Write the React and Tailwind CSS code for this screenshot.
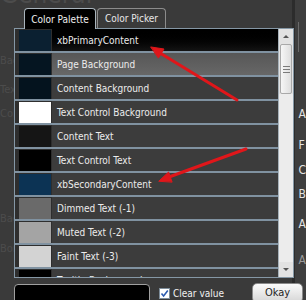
import React from "react";

const rows = [
  { name: "xbPrimaryContent", swatch: "bg-[#0b2031]", row: "bg-gradient-to-b from-[#000000] to-[#141414]" },
  { name: "Page Background", swatch: "bg-[#051521]", row: "bg-gradient-to-b from-[#575757] to-[#676767]" },
  { name: "Content Background", swatch: "bg-[#04131e]", row: "bg-[#3c3c3c]" },
  { name: "Text Control Background", swatch: "bg-[#ffffff]", row: "bg-[#3c3c3c]" },
  { name: "Content Text", swatch: "bg-[#151515]", row: "bg-[#3c3c3c]" },
  { name: "Text Control Text", swatch: "bg-[#000000]", row: "bg-[#3c3c3c]" },
  { name: "xbSecondaryContent", swatch: "bg-[#0c3354]", row: "bg-[#3c3c3c]" },
  { name: "Dimmed Text (-1)", swatch: "bg-[#6a6a6a]", row: "bg-[#3c3c3c]" },
  { name: "Muted Text (-2)", swatch: "bg-[#a4a4a4]", row: "bg-[#3c3c3c]" },
  { name: "Faint Text (-3)", swatch: "bg-[#d3d3d3]", row: "bg-[#3c3c3c]" },
  { name: "Tooltip Background", swatch: "bg-[#000000]", row: "bg-[#3c3c3c]" },
];

function Arrows() {
  return (
    <svg className="pointer-events-none absolute inset-0" width="306" height="300">
      <g fill="#e0161a" stroke="#e0161a" strokeLinecap="round">
        <line x1="237" y1="100" x2="160" y2="53" strokeWidth="3" />
        <polygon points="151,47 164,49 158.6,57.8" strokeWidth="1" />
        <line x1="246" y1="149" x2="169" y2="177" strokeWidth="3" />
        <polygon points="159,181 168.6,172 172,181.8" strokeWidth="1" />
      </g>
    </svg>
  );
}

export default function App() {
  return (
    <div className="relative h-[300px] w-[306px] overflow-hidden bg-[#3a3a3a] font-['DejaVu_Sans_Condensed','DejaVu_Sans',sans-serif]">
      {/* page behind the popup */}
      <div className="flex h-full">
        <div className="flex w-[293px] flex-col text-[#4c4c4c]">
          <div className="-mt-[21px] text-[26px] leading-[30px]">General</div>
          <div className="mt-[44px] text-[11px]">Back</div>
          <div className="mt-[12px] text-[11px]">Text</div>
          <div className="mt-[8px] text-[11px]">Colo</div>
          <div className="mt-[88px] text-[11px]">Back</div>
          <div className="mt-[14px] text-[11px]">Bord</div>
        </div>
        <div className="flex flex-1 flex-col border-l-[3px] border-[#2c2c2c] bg-[#3e3e3e] pl-[3px] text-[12px] leading-[12px] text-[#e4e4e4]">
          <div className="mt-[22px] h-[30px] border-l border-[#6a6a6a]" />
          <div className="mt-[56px]">A</div>
          <div className="mt-[19px]">F</div>
          <div className="mt-[13px]">C</div>
          <div className="mt-[12px]">B</div>
          <div className="mt-[18px]">A</div>
          <div className="mt-[24px] text-[#9a9a9a]">A</div>
        </div>
      </div>

      {/* colour popup */}
      <div className="absolute left-[14px] top-[8px] flex w-[289px] flex-col">
        <div className="flex h-[20px] items-end gap-[1px] pl-[10px]">
          <div className="relative z-10 -mb-[1px] flex h-[21px] w-[72px] items-center justify-center rounded-t-[4px] border border-b-0 border-[#a9b4bc] bg-black text-[10px] text-[#f0f0f0]">
            Color Palette
          </div>
          <div className="flex h-[20px] w-[69px] items-center justify-center rounded-t-[4px] border border-b-0 border-[#8c8c8c] bg-[#3a3a3a] text-[10px] text-[#e8e8e8]">
            Color Picker
          </div>
        </div>

        <div className="flex h-[250px] w-[280px] border border-[#8597a5] bg-[#2d2d2d]">
          <div className="flex flex-1 flex-col overflow-hidden">
            {rows.map((r) => (
              <div key={r.name} className="flex h-[24px] shrink-0 border-b-2 border-[#8092a1]">
                <div className="w-[37px] shrink-0 bg-[#2e2e2e] pl-[4px] pt-[1px]">
                  <div className={`h-[21px] w-[32px] ${r.swatch}`} />
                </div>
                <div className={`flex flex-1 items-center pl-[5px] text-[10px] whitespace-nowrap text-[#ececec] ${r.row}`}>
                  {r.name}
                </div>
              </div>
            ))}
          </div>
          <div className="flex w-[15px] flex-col border-l border-[#a7b2ba] bg-[#e2e2e2]">
            <div className="flex h-[15px] items-center justify-center">
              <div className="h-0 w-0 border-x-[3px] border-b-[3px] border-x-transparent border-b-[#555]" />
            </div>
            <div className="mx-[1px] flex h-[50px] flex-col items-center justify-center gap-[2px] rounded-[2px] border border-[#a9a9a9] bg-gradient-to-r from-[#f6f6f6] to-[#dedede]">
              <div className="h-px w-[7px] bg-[#7a7a7a]" />
              <div className="h-px w-[7px] bg-[#7a7a7a]" />
              <div className="h-px w-[7px] bg-[#7a7a7a]" />
            </div>
            <div className="flex-1 bg-[#ececec]" />
            <div className="flex h-[15px] items-center justify-center">
              <div className="h-0 w-0 border-x-[3px] border-t-[3px] border-x-transparent border-t-[#555]" />
            </div>
          </div>
        </div>

        <div className="mt-[6px] flex items-start">
          <div className="h-[20px] w-[136px] rounded-[4px] border border-[#a0a0a0] bg-black" />
          <div className="ml-[9px] mt-[4px] flex h-[11px] w-[11px] items-center justify-center border border-[#7d8c99] bg-white">
            <svg width="9" height="9" viewBox="0 0 9 9">
              <path d="M1.5 4.5 L3.6 7 L7.8 1.5" fill="none" stroke="#2d5cb0" strokeWidth="1.6" />
            </svg>
          </div>
          <div className="ml-[3px] mt-[4px] text-[10px] leading-[12px] text-[#f0f0f0]">Clear value</div>
          <div className="-mt-[1px] ml-auto flex h-[20px] w-[51px] items-start justify-center rounded-[5px] border border-[#8a8a8a] bg-gradient-to-b from-[#fbfbfb] to-[#d6d6d6] pt-[3px] text-[11px] leading-[12px] text-[#1e1e1e]">
            Okay
          </div>
        </div>
      </div>

      <Arrows />
    </div>
  );
}
